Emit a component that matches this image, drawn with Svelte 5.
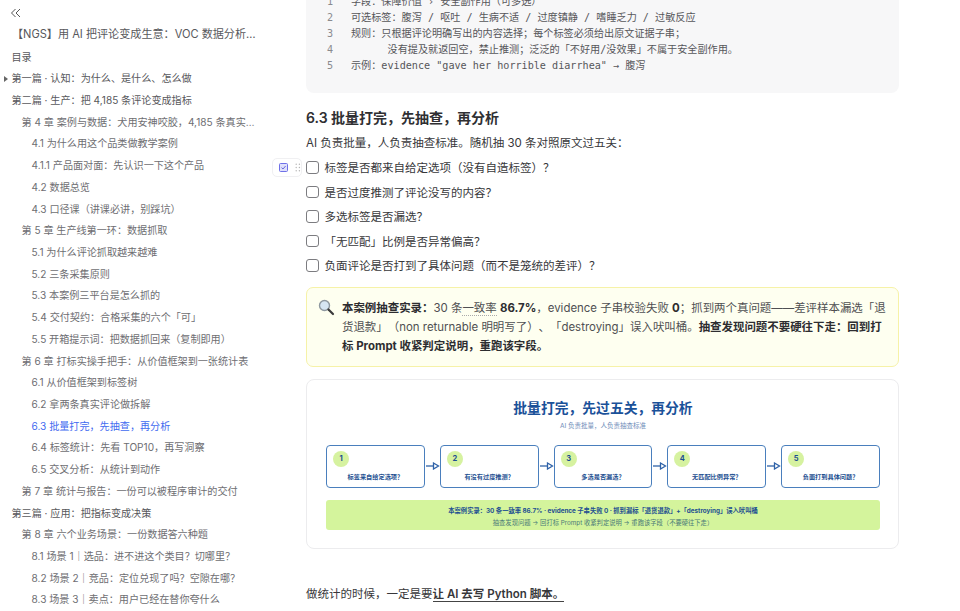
<script>
	const toc = [
		{ level: 0, text: '目录' },
		{ level: 0, text: '第一篇 · 认知：为什么、是什么、怎么做', collapsed: true },
		{ level: 0, text: '第二篇 · 生产：把 4,185 条评论变成指标' },
		{ level: 1, text: '第 4 章 案例与数据：犬用安神咬胶，4,185 条真实评论全流程拆解' },
		{ level: 2, text: '4.1 为什么用这个品类做教学案例' },
		{ level: 2, text: '4.1.1 产品面对面：先认识一下这个产品' },
		{ level: 2, text: '4.2 数据总览' },
		{ level: 2, text: '4.3 口径课（讲课必讲，别踩坑）' },
		{ level: 1, text: '第 5 章 生产线第一环：数据抓取' },
		{ level: 2, text: '5.1 为什么评论抓取越来越难' },
		{ level: 2, text: '5.2 三条采集原则' },
		{ level: 2, text: '5.3 本案例三平台是怎么抓的' },
		{ level: 2, text: '5.4 交付契约：合格采集的六个「可」' },
		{ level: 2, text: '5.5 开箱提示词：把数据抓回来（复制即用）' },
		{ level: 1, text: '第 6 章 打标实操手把手：从价值框架到一张统计表' },
		{ level: 2, text: '6.1 从价值框架到标签树' },
		{ level: 2, text: '6.2 拿两条真实评论做拆解' },
		{ level: 2, text: '6.3 批量打完，先抽查，再分析', active: true },
		{ level: 2, text: '6.4 标签统计：先看 TOP10，再写洞察' },
		{ level: 2, text: '6.5 交叉分析：从统计到动作' },
		{ level: 1, text: '第 7 章 统计与报告：一份可以被程序审计的交付' },
		{ level: 0, text: '第三篇 · 应用：把指标变成决策' },
		{ level: 1, text: '第 8 章 六个业务场景：一份数据答六种题' },
		{ level: 2, text: '8.1 场景 1｜选品：进不进这个类目？切哪里？' },
		{ level: 2, text: '8.2 场景 2｜竞品：定位兑现了吗？空隙在哪？' },
		{ level: 2, text: '8.3 场景 3｜卖点：用户已经在替你夸什么' }
	];

	const codeLines = [
		'字段：保障价值 › 安全副作用（可多选）',
		'可选标签：腹泻 / 呕吐 / 生病不适 / 过度镇静 / 嗜睡乏力 / 过敏反应',
		'规则：只根据评论明确写出的内容选择；每个标签必须给出原文证据子串；',
		'      没有提及就返回空，禁止推测；泛泛的「不好用/没效果」不属于安全副作用。',
		'示例：evidence "gave her horrible diarrhea" → 腹泻'
	];

	const checks = [
		'标签是否都来自给定选项（没有自造标签）？',
		'是否过度推测了评论没写的内容？',
		'多选标签是否漏选？',
		'「无匹配」比例是否异常偏高？',
		'负面评论是否打到了具体问题（而不是笼统的差评）？'
	];

	const gates = ['标签来自给定选项？', '有没有过度推测？', '多选是否漏选？', '无匹配比例异常？', '负面打到具体问题？'];
</script>

<div class="page">
	<aside class="sidebar">
		<button class="collapse" aria-label="收起目录">
			<svg width="12" height="10" viewBox="0 0 12 10" fill="none" stroke="#555" stroke-width="1">
				<path d="M5.5 1 1.5 5l4 4M10 1 6 5l4 4" />
			</svg>
		</button>
		<div class="doc-title">【NGS】用 AI 把评论变成生意：VOC 数据分析实战课程讲义</div>
		<nav>
			{#each toc as item}
				<div class="toc-item level-{item.level}" class:active={item.active}>
					{#if item.collapsed}<span class="caret"></span>{/if}
					<span class="label">{item.text}</span>
				</div>
			{/each}
		</nav>
		<div class="block-tools">
			<svg width="9" height="9" viewBox="0 0 9 9" fill="none">
				<rect x="0.5" y="0.5" width="8" height="8" rx="1" fill="#dfe0fb" stroke="#6f70e8" />
				<path d="M2.5 4.6 4 6l2.6-3" stroke="#5a5bd8" stroke-width="0.9" />
			</svg>
			<svg width="6" height="9" viewBox="0 0 6 9" fill="#b5b5b5">
				<circle cx="1.2" cy="1.2" r="0.7" /><circle cx="4.4" cy="1.2" r="0.7" />
				<circle cx="1.2" cy="4.5" r="0.7" /><circle cx="4.4" cy="4.5" r="0.7" />
				<circle cx="1.2" cy="7.8" r="0.7" /><circle cx="4.4" cy="7.8" r="0.7" />
			</svg>
		</div>
	</aside>

	<main class="content">
		<div class="code-block">
			{#each codeLines as line, i}
				<div class="code-line"><span class="num">{i + 1}</span><span class="code-text">{line}</span></div>
			{/each}
		</div>

		<h2>6.3 批量打完，先抽查，再分析</h2>
		<p class="intro">AI 负责批量，人负责抽查标准。随机抽 30 条对照原文过五关：</p>

		<ul class="checks">
			{#each checks as check}
				<li><span class="box"></span>{check}</li>
			{/each}
		</ul>

		<div class="callout">
			<svg class="loupe" width="17" height="17" viewBox="0 0 17 17" fill="none">
				<circle cx="6.5" cy="6.5" r="5" fill="#d6e6f2" stroke="#8e989f" stroke-width="1.4" />
				<path d="M10.5 10.5 15 15" stroke="#3a3a3a" stroke-width="2.2" stroke-linecap="round" />
			</svg>
			<p>
				<b>本案例抽查实录：</b>30 条<span class="dotted">一致率</span> <b>86.7%</b>，evidence 子串校验失败 <b>0</b>；抓到两个真问题——差评样本漏选「退货退款」（non returnable 明明写了）、「destroying」误入吠叫桶。<b>抽查发现问题不要硬往下走：回到打标 Prompt 收紧判定说明，重跑该字段。</b>
			</p>
		</div>

		<figure class="diagram">
			<div class="diagram-title">批量打完，先过五关，再分析</div>
			<div class="diagram-sub">AI 负责批量，人负责抽查标准</div>
			<div class="gates">
				{#each gates as gate, i}
					{#if i > 0}
						<svg class="arrow" width="15" height="8" viewBox="0 0 15 8" fill="none" stroke="#2f62a8">
							<path d="M1 4h8" stroke-width="1.3" />
							<path d="M8.5 1 13.5 4l-5 3z" stroke-width="1.3" fill="#fff" />
						</svg>
					{/if}
					<div class="gate">
						<span class="gate-num">{i + 1}</span>
						<span class="gate-label">{gate}</span>
					</div>
				{/each}
			</div>
			<div class="banner">
				<div class="banner-main">本案例实录：30 条一致率 86.7% · evidence 子串失败 0 · 抓到漏标「退货退款」+「destroying」误入吠叫桶</div>
				<div class="banner-sub">抽查发现问题 → 回打标 Prompt 收紧判定说明 → 重跑该字段（不要硬往下走）</div>
			</div>
		</figure>

		<p class="closing">做统计的时候，一定是要<b>让 AI 去写 Python 脚本。</b></p>
	</main>
</div>

<style>
	:global(body) {
		margin: 0;
		background: #fff;
	}

	.page {
		display: flex;
		height: 611px;
		overflow: hidden;
		font-family: Inter, "Noto Sans CJK SC", sans-serif;
		color: #37373a;
	}

	.sidebar {
		position: relative;
		flex: none;
		width: 300px;
		box-sizing: border-box;
		padding: 8px 42px 0 0;
		color: #6e6e72;
		font-size: 10.1px;
	}

	.collapse {
		display: block;
		margin: 0 0 0 10px;
		padding: 0;
		height: 10px;
		border: 0;
		background: none;
		line-height: 0;
	}

	.doc-title {
		margin: 5px 0 0 12px;
		height: 23.5px;
		line-height: 23.5px;
		font-size: 11.1px;
		color: #58585c;
		white-space: nowrap;
		overflow: hidden;
		text-overflow: ellipsis;
	}

	.toc-item {
		position: relative;
		height: 21.72px;
		line-height: 21.72px;
		white-space: nowrap;
		overflow: hidden;
		text-overflow: ellipsis;
	}

	.level-0 {
		padding-left: 11.5px;
		color: #58585c;
	}

	.level-1 {
		padding-left: 21.5px;
	}

	.level-2 {
		padding-left: 31.5px;
	}

	.active {
		color: #3f6bf0;
	}

	.caret {
		position: absolute;
		left: 4px;
		top: 8px;
		border-left: 4px solid #666;
		border-top: 3px solid transparent;
		border-bottom: 3px solid transparent;
	}

	.block-tools {
		position: absolute;
		left: 272px;
		top: 158px;
		display: flex;
		align-items: center;
		gap: 7px;
		box-sizing: border-box;
		width: 30px;
		height: 19px;
		padding-left: 6px;
		background: #fff;
		border: 1px solid #f0f0f2;
		border-radius: 5px;
	}

	.content {
		flex: none;
		width: 593px;
		margin-left: 6px;
		font-size: 11.5px;
	}

	.code-block {
		margin-top: -12px;
		height: 105px;
		box-sizing: border-box;
		padding-top: 6px;
		background: #f7f7f8;
		border-radius: 8px;
		font-size: 10.15px;
		font-family: "DejaVu Sans Mono", "Noto Sans CJK SC", monospace;
		color: #56565a;
	}

	.code-line {
		display: flex;
		height: 16px;
		line-height: 16px;
	}

	.num {
		flex: none;
		width: 45px;
		padding-left: 21px;
		box-sizing: border-box;
		color: #8a8a8e;
	}

	.code-text {
		white-space: pre;
	}

	h2 {
		margin: 15px 0 0;
		height: 20px;
		line-height: 20px;
		font-size: 14px;
		font-weight: 600;
		color: #2f2f32;
	}

	.intro {
		margin: 5px 0 0;
		height: 20px;
		line-height: 20px;
	}

	.checks {
		list-style: none;
		margin: 2px 0 0;
		padding: 0;
	}

	.checks li {
		display: flex;
		align-items: center;
		height: 24.5px;
	}

	.box {
		flex: none;
		width: 10.5px;
		height: 10.5px;
		margin-right: 6px;
		border: 1px solid #7c7c80;
		border-radius: 3px;
		background: #fff;
	}

	.callout {
		display: flex;
		box-sizing: border-box;
		height: 80px;
		margin-top: 9px;
		padding: 11px 10px 0 11px;
		background: #fefff0;
		border: 1px solid #f6f2a8;
		border-radius: 7px;
		font-size: 11.45px;
		text-spacing-trim: space-all;
	}

	.loupe {
		flex: none;
		margin: 0 7px 0 0;
	}

	.callout p {
		margin: 0;
		line-height: 19px;
		color: #4f4f52;
	}

	.callout b {
		color: #2d2d30;
	}

	.dotted {
		border-bottom: 1px dotted #aaa;
	}

	.diagram {
		box-sizing: border-box;
		height: 170px;
		margin: 12px 0 0;
		padding: 20px 18px 0 19px;
		border: 1px solid #ececee;
		border-radius: 8px;
		text-align: center;
		color: #1d4f91;
	}

	.diagram-title {
		height: 16px;
		line-height: 16px;
		font-size: 13.8px;
		font-weight: 700;
		color: #1a5199;
	}

	.diagram-sub {
		margin-top: 6px;
		line-height: 8px;
		font-size: 6.5px;
		color: #6e8cb8;
	}

	.gates {
		display: flex;
		align-items: center;
		margin-top: 15px;
	}

	.arrow {
		flex: none;
		width: 15px;
	}

	.gate {
		position: relative;
		flex: 1;
		box-sizing: border-box;
		height: 43px;
		border: 1.2px solid #4a7fbd;
		border-radius: 4px;
		background: #fff;
	}

	.gate-num {
		position: absolute;
		left: 6px;
		top: 5px;
		width: 16px;
		height: 16px;
		border-radius: 50%;
		background: #d6f2a0;
		font-size: 7.5px;
		font-weight: 700;
		line-height: 16px;
	}

	.gate-label {
		position: absolute;
		left: 0;
		right: 0;
		bottom: 6px;
		font-size: 6.2px;
		font-weight: 700;
		line-height: 8px;
	}

	.banner {
		box-sizing: border-box;
		height: 30px;
		margin-top: 12px;
		padding-top: 7px;
		background: #d4f49c;
		border-radius: 3px;
		font-size: 6.3px;
		line-height: 8px;
	}

	.banner-main {
		font-weight: 700;
	}

	.banner-sub {
		margin-top: 4px;
		color: #4a7a78;
	}

	.closing {
		margin: 36px 0 0;
		line-height: 18px;
		font-size: 11.5px;
	}

	.closing b {
		font-weight: 600;
		border-bottom: 1px solid #444;
	}
</style>
